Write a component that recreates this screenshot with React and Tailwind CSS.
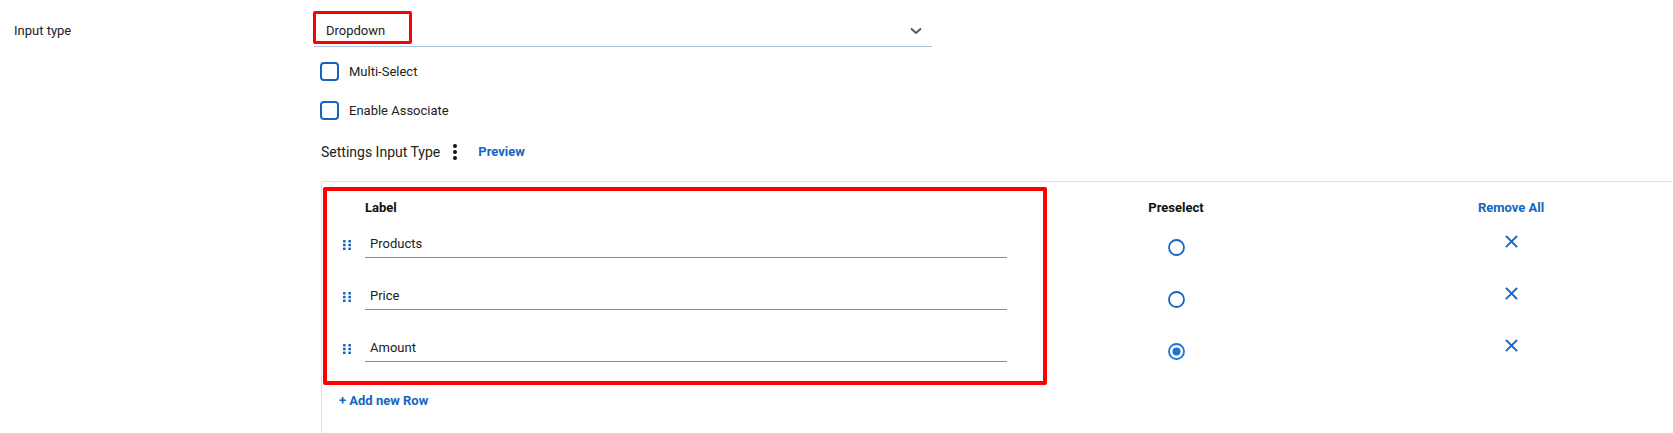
import React from "react";

const BLUE = "#1565c0";

function DragHandle() {
  return (
    <svg width="8" height="10" viewBox="0 0 8 10" className="shrink-0">
      {[0, 3.75, 7.5].map((y) => (
        <g key={y}>
          <rect x="0" y={y} width="2.6" height="2.6" rx="0.6" fill={BLUE} />
          <rect x="5.4" y={y} width="2.6" height="2.6" rx="0.6" fill={BLUE} />
        </g>
      ))}
    </svg>
  );
}

function Radio({ checked }) {
  const c = checked ? "#1976d2" : BLUE;
  return (
    <svg width="17" height="17" viewBox="0 0 17 17">
      <circle cx="8.5" cy="8.5" r="7.5" fill="none" stroke={c} strokeWidth="1.8" />
      {checked && <circle cx="8.5" cy="8.5" r="4" fill={c} />}
    </svg>
  );
}

function XIcon() {
  return (
    <svg width="13" height="13" viewBox="0 0 13 13">
      <path d="M1.5 1.5 L11.5 11.5 M11.5 1.5 L1.5 11.5" stroke={BLUE} strokeWidth="1.8" strokeLinecap="square" />
    </svg>
  );
}

function Checkbox({ label, className }) {
  return (
    <div className={"ml-[6px] flex items-center gap-[10px] h-[19px] " + className}>
      <div className="w-[19px] h-[19px] rounded-[4px] border-2 border-[#1565c0] bg-white shrink-0" />
      <span className="text-[13px] leading-[20px] text-[#212121]">{label}</span>
    </div>
  );
}

function Row({ text, checked, first }) {
  return (
    <div className={"flex items-start h-[27px] pl-[21px] " + (first ? "mt-[13px]" : "mt-[25px]")}>
      <div className="w-[8px] h-[27px] flex items-center">
        <DragHandle />
      </div>
      <div className="ml-[14px] w-[642px] h-[27px] border-b border-[#8a8a8a] flex items-center pl-[5px] text-[13px] text-[#212121]">
        {text}
      </div>
      <div className="ml-[109px] w-[120px] flex justify-center pt-[8px]">
        <Radio checked={checked} />
      </div>
      <div className="ml-[215px] w-[120px] flex justify-center pt-[4px]">
        <XIcon />
      </div>
    </div>
  );
}

export default function App() {
  return (
    <div
      className="w-full h-[433px] bg-white overflow-hidden flex"
      style={{ fontFamily: "Roboto, 'Liberation Sans', sans-serif" }}
    >
      <div className="w-[314px] shrink-0 pl-[14px] pt-[21px] text-[13px] leading-[20px] text-[#212121]">
        Input type
      </div>
      <div className="flex-1 flex flex-col">
        <div className="relative w-[618px] mt-[11px] h-[36px] border-b border-[#aac4e4] flex items-center justify-between pl-[12px] pr-[10px] pt-[4px]">
          <span className="text-[13px] leading-[20px] text-[#212121]">Dropdown</span>
          <svg width="12" height="8" viewBox="0 0 12 8">
            <polyline points="1,1.5 6,6 11,1.5" fill="none" stroke="#555" strokeWidth="1.8" />
          </svg>
          <div className="absolute left-[-1px] top-0 w-[99px] h-[33px] border-[3px] border-[#ff0000] rounded-[2px]" />
        </div>

        <Checkbox label="Multi-Select" className="mt-[15px]" />
        <Checkbox label="Enable Associate" className="mt-[20px]" />

        <div className="mt-[22px] ml-[7px] h-[20px] flex items-center">
          <span className="text-[14px] leading-[20px] text-[#212121]">Settings Input Type</span>
          <svg width="4" height="16" viewBox="0 0 4 16" className="ml-[13px]">
            <circle cx="2" cy="2" r="2" fill="#111" />
            <circle cx="2" cy="8" r="2" fill="#111" />
            <circle cx="2" cy="14" r="2" fill="#111" />
          </svg>
          <span className="ml-[21px] text-[13px] font-bold leading-[20px] text-[#1565c0]">Preview</span>
        </div>

        <div className="relative mt-[19px] ml-[7px] flex-1 border-l border-t border-[#e0e0e0] flex flex-col">
          <div className="flex items-center h-[20px] mt-[16px] pl-[21px] text-[13px] font-bold leading-[20px]">
            <div className="w-[8px]" />
            <div className="ml-[14px] w-[642px] text-[#111]">Label</div>
            <div className="ml-[109px] w-[120px] text-center text-[#111]">Preselect</div>
            <div className="ml-[215px] w-[120px] text-center text-[#1565c0]">Remove All</div>
          </div>
          <Row text="Products" first />
          <Row text="Price" />
          <Row text="Amount" checked />
          <div className="mt-[29px] pl-[17px] h-[20px] text-[13px] font-bold leading-[20px] text-[#1565c0]">
            + Add new Row
          </div>
          <div className="absolute left-[1px] top-[5px] w-[724px] h-[198px] border-[4px] border-[#ff0000] rounded-[2px]" />
        </div>
      </div>
    </div>
  );
}
